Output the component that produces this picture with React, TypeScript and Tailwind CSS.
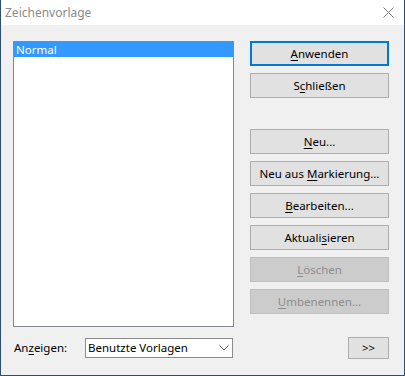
import type { ReactNode } from 'react';

const FONT = { fontFamily: '"Noto Sans", "Open Sans", sans-serif' };

interface DialogButtonProps {
  children: ReactNode;
  isDefault?: boolean;
  disabled?: boolean;
  className?: string;
}

function Mn({ children }: { children: ReactNode }) {
  return <span className="underline decoration-1 underline-offset-[2px]">{children}</span>;
}

function DialogButton({ children, isDefault = false, disabled = false, className = '' }: DialogButtonProps) {
  const tone = disabled
    ? 'border-[#bfbfbf] bg-[#cccccc] text-[#8d8d8d]'
    : isDefault
      ? 'border-2 border-[#0078d7] bg-[#e1e1e1] text-black'
      : 'border-[#adadad] bg-[#e1e1e1] text-black';

  return (
    <div
      className={`flex h-[25px] w-[139px] items-center justify-center border text-[11.5px] leading-none ${tone} ${className}`}
    >
      <span className="whitespace-pre">{children}</span>
    </div>
  );
}

export default function App() {
  return (
    <div
      className="flex h-[376px] w-[405px] flex-col border border-t-0 border-[#2f4e6d] bg-[#f0f0f0]"
      style={FONT}
    >
      <div className="flex h-[25px] shrink-0 items-center justify-between bg-white pl-[4px] pr-[10px]">
        <span className="text-[12px] text-[#8a8a8a]">Zeichenvorlage</span>
        <svg width="11" height="11" viewBox="0 0 11 11">
          <path d="M0.5 0.5 L10.5 10.5 M10.5 0.5 L0.5 10.5" stroke="#808080" strokeWidth="1" fill="none" />
        </svg>
      </div>

      <div className="flex flex-1 flex-col pl-[12px] pr-[15px] pt-[16px]">
        <div className="flex gap-[16px]">
          <div className="h-[286px] w-[221px] border border-[#828790] bg-white">
            <div className="flex h-[15px] items-center bg-[#3399ff] pl-[2px] text-[11.5px] leading-none text-white">
              Normal
            </div>
          </div>

          <div className="flex flex-col">
            <DialogButton isDefault>
              <Mn>A</Mn>nwenden
            </DialogButton>
            <DialogButton className="mt-[7px]">
              S<Mn>c</Mn>hließen
            </DialogButton>
            <DialogButton className="mt-[31px]">
              <Mn>N</Mn>eu...
            </DialogButton>
            <DialogButton className="mt-[7px]">
              {'Neu aus '}
              <Mn>M</Mn>arkierung...
            </DialogButton>
            <DialogButton className="mt-[7px]">
              <Mn>B</Mn>earbeiten...
            </DialogButton>
            <DialogButton className="mt-[7px]">
              Aktuali<Mn>s</Mn>ieren
            </DialogButton>
            <DialogButton className="mt-[7px]" disabled>
              <Mn>L</Mn>öschen
            </DialogButton>
            <DialogButton className="mt-[7px]" disabled>
              <Mn>U</Mn>mbenennen...
            </DialogButton>
          </div>
        </div>

        <div className="mt-[10px] flex h-[22px] items-center justify-between">
          <div className="flex items-center">
            <span className="w-[72px] pl-[1px] text-[11.5px] text-black">
              An<Mn>z</Mn>eigen:
            </span>
            <div className="flex h-[20px] w-[148px] items-center justify-between border border-[#8c8c8c] bg-white pl-[2px] pr-[3px] text-[11.5px] text-black">
              <span>Benutzte Vorlagen</span>
              <svg width="10" height="6" viewBox="0 0 10 6">
                <path d="M0.5 0.5 L5 5 L9.5 0.5" stroke="#555555" strokeWidth="1" fill="none" />
              </svg>
            </div>
          </div>
          <div className="flex h-[22px] w-[41px] items-center justify-center border border-[#adadad] bg-[#e1e1e1] text-[11.5px] text-black">
            &gt;&gt;
          </div>
        </div>
      </div>
    </div>
  );
}
